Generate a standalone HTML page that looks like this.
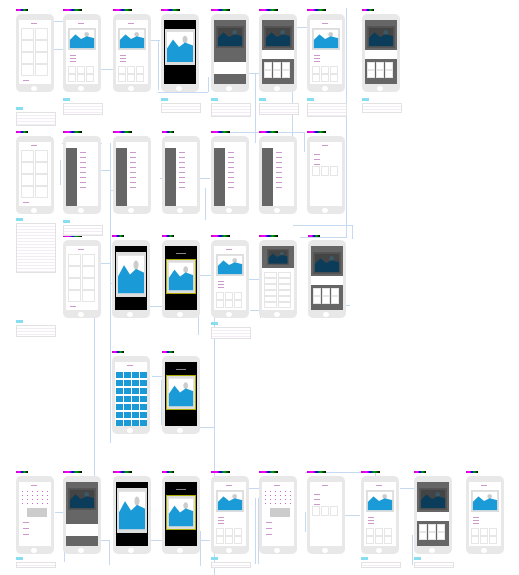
<!DOCTYPE html><html><head><style>
body{margin:0;width:519px;height:564px;background:#fff;position:relative;overflow:hidden;font-family:"Liberation Sans",sans-serif}
.ph{position:absolute;width:38px;height:78px;background:#e8e8e8;border-radius:5px}
.sc{position:absolute;left:3px;top:6px;width:32px;height:64px;background:#fff;overflow:hidden}
.hb{position:absolute;left:15px;top:72px;width:6px;height:5px;border-radius:50%;background:#fff}
.lb{position:absolute;height:2px;background:linear-gradient(90deg,#c0c,#f0f 30%,#00c 50%,#0a0 70%,#000)}
.nt{position:absolute;border:1px solid #e2e2e2;background:repeating-linear-gradient(180deg,#fff 0,#fff 2px,#f3ecf6 2px,#f3ecf6 3px)}
.cy{position:absolute;width:7px;height:3px;background:#8de;}
.ln{position:absolute;background:#c5daf0}
.r{position:absolute;border:1px solid #e6e6e6;background:#fff}
.t{position:absolute;height:1px;width:6px;background:#c9c}
</style></head><body>
<div id="w"></div>
<script>
var W=document.getElementById('w'),h='';
function mt(x,y,w,hh,dark){var c=dark?'#0b3d5a':'#1a9ad6',s=dark?'#3a5a6a':'#ccc';
return '<svg style="position:absolute;left:'+x+'px;top:'+y+'px" width="'+w+'" height="'+hh+'" viewBox="0 0 30 24" preserveAspectRatio="none"><rect width="30" height="24" fill="'+(dark?'#555':'#ddd')+'"/><rect x="2" y="2" width="26" height="20" fill="'+(dark?'#444':'#fff')+'"/><circle cx="20" cy="7" r="2.5" fill="'+s+'"/><polygon points="2,13 8,7 14,12 20,9 28,11 28,22 2,22" fill="'+c+'"/></svg>';}
function lines(n,y0,dy,x){var s='';for(var i=0;i<n;i++)s+='<div class="t" style="left:'+x+'px;top:'+(y0+i*dy)+'px"></div>';return s;}
function boxes(cols,rows,y0,bh){var s='',bw=Math.floor(28/cols);for(var r=0;r<rows;r++)for(var c=0;c<cols;c++)s+='<div class="r" style="left:'+(2+c*bw)+'px;top:'+(y0+r*(bh+2))+'px;width:'+(bw-3)+'px;height:'+bh+'px"></div>';return s;}
function scr(t){var s='',bg='#fff';
if(t=='w'){s=lines(1,3,0,12)+boxes(2,4,8,10)+lines(3,60,0,4);}
if(t=='w2'){s=lines(1,3,0,12)+lines(3,12,5,4)+boxes(3,1,24,8);}
if(t=='img'){s=lines(1,3,0,12)+mt(2,8,28,22)+lines(3,35,3,4)+boxes(3,2,46,6);}
if(t=='blk'){bg='#000';s=mt(1,9,30,36);}
if(t=='blky'){bg='#000';s='<div style="position:absolute;left:11px;top:7px;width:10px;height:1px;background:#888"></div><div style="position:absolute;left:1px;top:13px;width:30px;height:35px;box-sizing:border-box;border:1px solid #aa0"></div>'+mt(2,14,28,33);}
if(t=='blkimg'){bg='#000';s=mt(1,6,30,45);}
if(t=='dark'){bg='#666';s=mt(2,6,28,22,1)+'<div style="position:absolute;left:0;top:42px;width:32px;height:12px;background:#fff"></div>';}
if(t=='dark2'){bg='#666';s=mt(2,6,28,22,1)+'<div style="position:absolute;left:0;top:30px;width:32px;height:9px;background:#fff"></div>'+boxes(3,2,42,6);}
if(t=='side'){s='<div style="position:absolute;left:0;top:6px;width:11px;height:58px;background:#666"></div>'+lines(8,10,5,14);}
if(t=='darktop'){s='<div style="position:absolute;left:0;top:0;width:32px;height:22px;background:#666"></div>'+mt(5,3,22,16,1)+boxes(2,6,26,4);}
if(t=='grid'){s=lines(1,3,0,12);for(var r=0;r<7;r++)for(var c=0;c<4;c++)s+='<div style="position:absolute;left:'+(1+c*8)+'px;top:'+(10+r*8)+'px;width:7px;height:6px;background:#1a9ad6"></div>';}
if(t=='cal'){s=lines(1,3,0,12);for(var r=0;r<4;r++)for(var c=0;c<6;c++)s+='<div style="position:absolute;left:'+(3+c*5)+'px;top:'+(9+r*4)+'px;width:1px;height:1px;background:#c6c"></div>';s+='<div style="position:absolute;left:8px;top:26px;width:20px;height:9px;background:#ccc"></div>'+lines(3,40,6,4);}
return '<div class="sc" style="background:'+bg+'">'+s+'</div>';}
function ph(x,y,t){h+='<div class="lb" style="left:'+x+'px;top:'+(y-5)+'px;width:'+(12+((x*7)%14))+'px"></div><div class="ph" style="left:'+x+'px;top:'+y+'px">'+scr(t)+'<div class="hb"></div></div>';}
function L(x,y,w,hh){h+='<div class="ln" style="left:'+x+'px;top:'+y+'px;width:'+w+'px;height:'+hh+'px"></div>';}
function N(x,y,w,hh){h+='<div class="cy" style="left:'+x+'px;top:'+(y-5)+'px"></div><div class="nt" style="left:'+x+'px;top:'+y+'px;width:'+w+'px;height:'+hh+'px"></div>';}
L(50,21,20,1);L(70,21,1,6);L(49,49,16,1);L(90,69,25,1);L(120,40,40,1);L(158,40,1,50);L(158,92,50,1);L(208,77,1,15);L(230,73,30,1);L(255,73,1,70);L(275,27,40,1);L(292,48,1,100);
L(346,8,1,230);L(300,237,47,1);L(62,143,40,1);L(60,160,1,25);L(110,143,1,300);L(100,170,10,1);L(110,190,30,1);L(160,178,50,1);L(205,188,1,32);L(213,140,1,40);L(213,132,92,1);L(304,132,1,20);
L(80,263,30,1);L(110,283,20,1);L(140,306,25,1);L(198,275,1,60);L(199,275,16,1);L(214,285,1,290);L(260,268,1,50);L(245,279,15,1);L(250,310,10,1);L(293,225,60,1);L(352,225,1,14);L(320,305,30,1);
L(152,376,12,1);L(161,380,1,45);L(200,427,14,1);L(94,260,1,220);
L(55,512,12,1);L(64,512,1,50);L(100,540,10,1);L(109,540,1,25);L(130,540,80,1);L(200,531,1,35);L(247,488,15,1);L(255,498,1,66);L(258,498,1,66);L(260,512,30,1);L(305,512,1,20);L(305,472,70,1);L(375,472,1,15);L(315,515,45,1);L(400,488,15,1);L(412,535,1,30);L(417,535,8,1);
[[16,'w'],[63,'img'],[113,'img'],[161,'blk'],[211,'dark'],[259,'dark2'],[307,'img'],[362,'dark2']].forEach(function(a){ph(a[0],14,a[1]);});
[[16,'w'],[63,'side'],[113,'side'],[162,'side'],[211,'side'],[259,'side'],[307,'w2']].forEach(function(a){ph(a[0],136,a[1]);});
[[63,'w'],[112,'blkimg'],[162,'blky'],[211,'img'],[259,'darktop'],[308,'dark2']].forEach(function(a){ph(a[0],240,a[1]);});
ph(112,356,'grid');ph(162,356,'blky');
[[16,'cal'],[63,'dark'],[113,'blkimg'],[162,'blky'],[211,'img'],[259,'cal'],[307,'w2'],[361,'img'],[414,'dark2'],[466,'img']].forEach(function(a){ph(a[0],476,a[1]);});
N(16,112,38,12);N(63,103,38,10);N(161,103,38,8);N(211,103,38,12);N(259,103,38,10);N(307,103,38,12);N(362,103,38,8);
N(16,223,38,48);N(63,225,38,9);N(16,325,38,10);N(211,327,38,10);
N(16,562,38,4);N(211,562,38,4);N(361,562,38,4);N(414,562,38,4);
W.innerHTML=h;
</script></body></html>
